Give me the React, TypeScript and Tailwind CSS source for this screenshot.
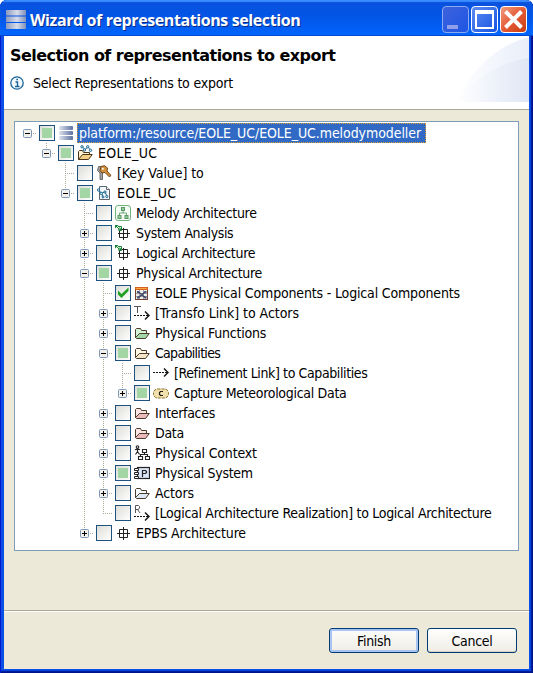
import type { ReactNode } from "react";

type IconName =
  | "stack" | "model" | "key" | "file" | "melody" | "gridGreen" | "grid" | "table"
  | "transfo" | "folderGreen" | "folderTan" | "folderRed" | "folderBlue" | "arrow"
  | "capability" | "context" | "system" | "realization";

type Row = {
  text: string;
  /** one character per tree column: " " empty, "|" line, "t" tee, "l" last, "+"/"-" expander */
  guides: string;
  below?: boolean;
  above?: boolean;
  state: "empty" | "partial" | "checked";
  icon: IconName;
  tracking?: string;
};

const rows: Row[] = [
  { text: "platform:/resource/EOLE_UC/EOLE_UC.melodymodeller", guides: "-", state: "partial", icon: "stack", tracking: "tracking-[-0.07px]" },
  { text: "EOLE_UC", guides: " -", above: true, state: "partial", icon: "model", tracking: "tracking-[0.3px]" },
  { text: "[Key Value] to", guides: "  t", state: "empty", icon: "key", tracking: "tracking-[-0.07px]" },
  { text: "EOLE_UC", guides: "  -", above: true, state: "partial", icon: "file", tracking: "tracking-[0.3px]" },
  { text: "Melody Architecture", guides: "   t", state: "empty", icon: "melody" },
  { text: "System Analysis", guides: "   +", above: true, below: true, state: "empty", icon: "gridGreen", tracking: "tracking-[-0.37px]" },
  { text: "Logical Architecture", guides: "   +", above: true, below: true, state: "empty", icon: "gridGreen" },
  { text: "Physical Architecture", guides: "   -", above: true, below: true, state: "partial", icon: "grid" },
  { text: "EOLE Physical Components - Logical Components", guides: "   |t", state: "checked", icon: "table", tracking: "tracking-[-0.16px]" },
  { text: "[Transfo Link] to Actors", guides: "   |+", above: true, below: true, state: "empty", icon: "transfo", tracking: "tracking-[-0.05px]" },
  { text: "Physical Functions", guides: "   |+", above: true, below: true, state: "empty", icon: "folderGreen", tracking: "tracking-[-0.24px]" },
  { text: "Capabilities", guides: "   |-", above: true, below: true, state: "partial", icon: "folderTan", tracking: "tracking-[-0.7px]" },
  { text: "[Refinement Link] to Capabilities", guides: "   ||t", state: "empty", icon: "arrow", tracking: "tracking-[-0.39px]" },
  { text: "Capture Meteorological Data", guides: "   ||+", above: true, state: "partial", icon: "capability" },
  { text: "Interfaces", guides: "   |+", above: true, below: true, state: "empty", icon: "folderRed" },
  { text: "Data", guides: "   |+", above: true, below: true, state: "empty", icon: "folderRed" },
  { text: "Physical Context", guides: "   |+", above: true, below: true, state: "empty", icon: "context", tracking: "tracking-[-0.17px]" },
  { text: "Physical System", guides: "   |+", above: true, below: true, state: "partial", icon: "system" },
  { text: "Actors", guides: "   |+", above: true, below: true, state: "empty", icon: "folderBlue", tracking: "tracking-[-0.13px]" },
  { text: "[Logical Architecture Realization] to Logical Architecture", guides: "   |l", state: "empty", icon: "realization" },
  { text: "EPBS Architecture", guides: "   +", above: true, state: "empty", icon: "grid", tracking: "tracking-[-0.18px]" },
];

function Guide({ kind, above, below }: { kind: string; above: boolean; below: boolean }) {
  const box = kind === "+" || kind === "-";
  const up = kind === "|" || kind === "t" || kind === "l" || (box && above);
  const down = kind === "|" || kind === "t" || (box && below);
  return (
    <svg width="19" height="20" className="shrink-0" fill="none" stroke="#aaa899" strokeDasharray="1 1">
      {up && <path d="M9.5 0V10" />}
      {down && <path d="M9.5 10V20" />}
      {(kind === "t" || kind === "l" || box) && <path d="M9 10.5H19" />}
      {box && (
        <g strokeDasharray="none">
          <rect x="5.5" y="6.5" width="8" height="8" rx="1" fill="#f2f0e9" stroke="#7c98b8" />
          <path d="M7 10.5H12" stroke="#000" />
          {kind === "+" && <path d="M9.5 8V13" stroke="#000" />}
        </g>
      )}
    </svg>
  );
}

function CheckBox({ state }: { state: Row["state"] }) {
  return (
    <span className="ml-0.5 flex size-4 shrink-0 items-center justify-center border border-[#1c5180] bg-linear-to-br from-[#dcdcd7] to-white">
      {state === "partial" && <span className="size-2.5 bg-[#a3d6a4]" />}
      {state === "checked" && (
        <svg width="14" height="14" viewBox="0 0 14 14">
          <path d="M2 4.500V8.500L5.500 12L12.500 5V1.500L5.500 8Z" fill="#21a121" />
        </svg>
      )}
    </span>
  );
}

function Folder({ back, front }: { back: string; front: string }) {
  return (
    <g stroke="#4a3a28" strokeLinejoin="round">
      <path d="M1.500 12.500V4.500L2.500 3.500H6.500L7.500 5.500H12.500V8.500H6L1.500 12.500Z" fill={back} />
      <path d="M1.500 12.500L5.500 8.500H15.300L11.500 13.500H2.500Z" fill={front} />
    </g>
  );
}

const art: Record<IconName, ReactNode> = {
  stack: (
    <g fill="url(#steel)">
      <rect x="1" y="1" width="14" height="4" rx="1" />
      <rect x="1" y="6" width="14" height="4" rx="1" />
      <rect x="1" y="11" width="14" height="4" rx="1" />
    </g>
  ),
  model: (
    <>
      <g stroke="#4c3517" strokeLinejoin="round">
        <path d="M1.500 14.500V6.500L2.500 5.500H5.500L6.500 7.500H12.500V9.500" fill="#fff3cf" />
        <path d="M1.500 14.500L5.500 9.500H15.300L11.500 14.500Z" fill="#f2cf86" />
      </g>
      <g fill="#d8edf8" stroke="#1f6a94">
        <path d="M5 1.500L8 4.500L11 2L14 5.500" fill="none" />
        <circle cx="5" cy="1.800" r="1.200" />
        <circle cx="7.500" cy="5" r="1.200" />
        <circle cx="10.700" cy="1.800" r="1.200" />
        <circle cx="13.500" cy="5.300" r="1.200" />
      </g>
    </>
  ),
  key: (
    <>
      <path d="M2.500 1.500H7.500L8.500 5.500L6.500 7.500V14.500H4V8L1.500 5.500Z" stroke="#6b6b6b" fill="#a3a3a3" />
      <path d="M5 1.500L8.500 .7L11.500 3L11 6L14.800 10.200L13.500 12L9 7.500L6 8L4 5.500Z" fill="#d2913f" stroke="#704515" />
      <circle cx="6.800" cy="3.800" r="1" fill="#fff" />
    </>
  ),
  file: (
    <>
      <path d="M3.500 1.500H10.500L13.500 4.500V14.500H3.500Z" fill="#f2f7fb" stroke="#5c6570" />
      <path d="M10.500 1.500V4.500H13.500" fill="#fff" stroke="#5c6570" />
      <g fill="#d8edf8" stroke="#1f6a94">
        <path d="M2.500 5L5.500 8L9 7L11 11.500M5.500 8L7 11.500" fill="none" />
        <circle cx="2.500" cy="5" r="1.200" /><circle cx="5.300" cy="8.500" r="1.200" />
        <circle cx="9" cy="7" r="1.100" /><circle cx="10.800" cy="11.500" r="1.100" />
        <circle cx="7" cy="12" r="1" />
      </g>
    </>
  ),
  melody: (
    <>
      <rect x=".5" y=".5" width="15" height="15" rx="2.500" fill="#f5fbf5" stroke="#6fb67c" />
      <path d="M8 5V8M4.500 11V8H11.500V11" fill="none" stroke="#6fa878" />
      <g fill="#8fcb96" stroke="#5d9868">
        <rect x="6.500" y="2.500" width="3" height="3" />
        <rect x="3" y="10.500" width="3" height="3" />
        <rect x="10" y="10.500" width="3" height="3" />
      </g>
    </>
  ),
  gridGreen: (
    <>
      <path d="M4.500 4.500H12.500V12.500H4.500ZM8.500 3V15M3 8.500H15" fill="none" stroke="#222" />
      <path d="M0 0H3.500L0 3.500Z" fill="#128033" />
      <path d="M1 1L4 4M3 1.500H6.500V5.500H3.500" fill="none" stroke="#128033" />
      <circle cx="4.500" cy="4" r="1" fill="#d7f4da" stroke="#128033" />
    </>
  ),
  grid: <path d="M4.500 4.500H12.500V12.500H4.500ZM8.500 2V15M2 8.500H15" fill="none" stroke="#222" />,
  table: (
    <>
      <rect x="1.500" y="2.500" width="12" height="12" fill="#f0ece8" stroke="#754334" />
      <rect x="1" y="2" width="13" height="3" fill="#d5611d" />
      <path d="M2 3.500H13" stroke="#f4a743" />
      <path d="M2 8.500H13M2 11.500H13M5.500 5V14M9.500 5V14" stroke="#a29ba8" />
      <path d="M4 6.500L11.500 13M11.500 6.500L4 13" stroke="#32405c" strokeWidth="1.100" />
      <path d="M3 6H5V8H3ZM10.500 6H12.500V8H10.500ZM3 11.500H5V13.500H3ZM10.500 11.500H12.500V13.500H10.500ZM7 9H9V11H7Z" fill="#425373" />
    </>
  ),
  transfo: (
    <g fill="none" stroke="#111">
      <path d="M0 1.500H7M3.500 1.500V8" stroke="#555" />
      <path d="M0 10.500H15" strokeDasharray="2 1" />
      <path d="M11 6.500L15 10.500L11 14.500" strokeWidth="1.400" />
    </g>
  ),
  folderGreen: <Folder back="#d6f4d8" front="#a3d8aa" />,
  folderTan: <Folder back="#fff8e6" front="#f6e5c8" />,
  folderRed: <Folder back="#fae4e4" front="#ecbabc" />,
  folderBlue: <Folder back="#f4f8ff" front="#dce8f5" />,
  arrow: (
    <g fill="none" stroke="#111">
      <path d="M0 7.500H15" strokeDasharray="2 1" />
      <path d="M11 3.500L15 7.500L11 11.500" strokeWidth="1.400" />
    </g>
  ),
  capability: (
    <>
      <rect x=".5" y="4" width="15" height="9" rx="4" fill="#efe0ad" stroke="#8f7132" strokeDasharray="3 1" />
      <path d="M10 6.500H7.500L6.500 7.500V9.500L7.500 10.500H10" fill="none" stroke="#221a0a" strokeWidth="1.200" />
    </>
  ),
  context: (
    <g fill="none" stroke="#222" strokeWidth="1.100">
      <circle cx="3.500" cy="2" r="1.300" />
      <path d="M1 4.800L3.500 3.800L6 4.800M3.500 4V6.500L1.500 9.500M3.500 6.500L5.500 9.500" />
      <path d="M8.500 4.500H12.500V7.500H8.500ZM10.500 8V10M6.500 12V9.500H13.500V12M4.500 11.500H8.500V14.500H4.500ZM11.500 11.500H15.500V14.500H11.500Z" />
    </g>
  ),
  system: (
    <g fill="none" stroke="#222">
      <rect x="3.500" y="2.500" width="12" height="11" fill="#dae4f5" strokeWidth="1.200" />
      <path d="M.5 3.500H4.500V5.500H.5ZM.5 7.500H4.500V9.500H.5ZM.5 11.500H4.500V13.500H.5Z" fill="#fff" />
      <path d="M8.500 12V5.500H11.500L12.500 6.500V7.500L11.500 8.500H8.500" strokeWidth="1.200" />
    </g>
  ),
  realization: (
    <g fill="none" stroke="#111">
      <path d="M1.500 8V.5H4.500L5.500 1.500V3L4.500 4.500H1.500M3.500 4.500L6 8" stroke="#555" />
      <path d="M0 11.500H15" strokeDasharray="2 1" />
      <path d="M11 7.500L15 11.500L11 15.500" strokeWidth="1.400" />
    </g>
  ),
};

function Icon({ name }: { name: IconName }) {
  return (
    <svg width="16" height="16" viewBox="0 0 16 16" className="ml-[3px] shrink-0">
      {name === "stack" && (
        <defs>
          <linearGradient id="steel">
            <stop offset="0" stopColor="#dfe4f0" />
            <stop offset="1" stopColor="#5c719f" />
          </linearGradient>
        </defs>
      )}
      {art[name]}
    </svg>
  );
}

function TreeRow({ row, selected }: { row: Row; selected: boolean }) {
  return (
    <div className="flex h-5 items-center pl-[3px]">
      {row.guides.split("").map((kind, i) => (
        <Guide key={i} kind={kind} above={!!row.above} below={!!row.below} />
      ))}
      <CheckBox state={row.state} />
      <Icon name={row.icon} />
      <span
        className={`ml-[3px] h-5 border pl-px text-[14px] leading-[18px] whitespace-pre ${row.tracking ?? "tracking-[-0.3px]"} ${
          selected ? "w-[349px] border-dotted border-[#e0a030] bg-[#316ac5] text-white" : "border-transparent"
        }`}
      >
        {row.text}
      </span>
    </div>
  );
}

function TitleBar() {
  return (
    <div className="flex h-9 shrink-0 items-center bg-linear-to-b from-[#0a50dc] via-[#0256e8] to-[#0166ff] px-1.5 shadow-[inset_0_2px_1px_#3b8cff,inset_0_-1px_0_#0148cf]">
      <svg width="20" height="19" viewBox="0 0 20 19" className="mt-[3px]">
        <defs>
          <linearGradient id="title-steel">
            <stop offset="0" stopColor="#8c99bd" />
            <stop offset=".55" stopColor="#d8dcea" />
            <stop offset="1" stopColor="#8290b8" />
          </linearGradient>
        </defs>
        <path d="M0 0H20V5.500H0ZM0 6.500H20V12H0ZM0 13H20V19H0Z" fill="url(#title-steel)" />
      </svg>
      <h1 className="mt-[3px] ml-1 grow font-['Open_Sans',sans-serif] text-[16px] leading-8 font-bold tracking-[-0.4px] whitespace-pre text-white [text-shadow:1px_1px_0_#0a2a86]">
        Wizard of representations selection
      </h1>
      <div className="mt-[3px] flex gap-0.5">
        <span className="size-[27px] rounded-[4px] border border-[#8fa9ee] bg-linear-to-br from-[#3c62dc] to-[#1c55e4]">
          <svg width="25" height="25"><path d="M4 18H15V22H4Z" fill="#8f9fe9" /></svg>
        </span>
        <span className="size-[27px] rounded-[4px] border border-white bg-linear-to-br from-[#5d8bf2] to-[#1252e0]">
          <svg width="25" height="25"><path d="M3 3H22V22H3ZM5 7V20H20V7Z" fill="#fff" fillRule="evenodd" /></svg>
        </span>
        <span className="size-[27px] rounded-[4px] border border-white bg-linear-to-br from-[#f09a7d] via-[#e35a35] to-[#c93c10]">
          <svg width="25" height="25"><path d="M4.500 4.500L20.500 20.500M20.500 4.500L4.500 20.500" stroke="#fff" strokeWidth="4" /></svg>
        </span>
      </div>
    </div>
  );
}

export default function App() {
  return (
    <div className="bg-white">
      <div className="flex h-[673px] w-[533px] flex-col overflow-hidden rounded-t-[7px] bg-[#0a50e6] font-['DejaVu_Sans_Condensed','DejaVu_Sans',sans-serif] text-black shadow-[inset_1px_0_0_#0019cf,inset_-1px_-1px_0_#00138c,inset_-2px_-2px_0_#001ea0,inset_-3px_-3px_0_#0441d8]">
        <TitleBar />
        <div className="mx-1 mb-1 flex grow flex-col bg-[#ece9d8]">
          <header className="flex h-[74px] shrink-0 border-b border-[#aca899] bg-white">
            <div className="w-[452px] pl-1.5">
              <h2 className="mt-[9px] font-['DejaVu_Sans',sans-serif] text-[16px] leading-[22px] font-bold tracking-[-0.54px] whitespace-pre">
                Selection of representations to export
              </h2>
              <p className="mt-[6px] flex items-center text-[14px] leading-5 tracking-[-0.2px] whitespace-pre">
                <svg width="14" height="14" viewBox="0 0 14 14" fill="none" stroke="#1b6398">
                  <circle cx="7" cy="7" r="6.200" fill="#f2faff" strokeWidth="1.300" />
                  <path d="M5.500 6H7.500V10.500M5 10.500H9.500" strokeWidth="1.400" />
                  <path d="M6.300 3.500H8" strokeWidth="1.700" />
                </svg>
                <span className="ml-[9px]">Select Representations to export</span>
              </p>
            </div>
            <svg width="73" height="66" viewBox="0 0 73 66">
              <defs>
                <linearGradient id="sweep">
                  <stop offset="0" stopColor="#fff" />
                  <stop offset="1" stopColor="#dfe6f5" />
                </linearGradient>
                <linearGradient id="sweep-back">
                  <stop offset="0" stopColor="#fff" />
                  <stop offset="1" stopColor="#e9eef9" />
                </linearGradient>
              </defs>
              <path d="M0 66Q25 14 73 1V66Z" fill="url(#sweep-back)" />
              <path d="M0 66Q31 28 73 22V66Z" fill="url(#sweep)" />
            </svg>
          </header>
          <main className="flex h-[501px] shrink-0 flex-col border-b border-[#aca899] px-2.5 pt-[11px]">
            <div className="h-[430px] w-[505px] border border-[#7f9db9] bg-white pt-px">
              {rows.map((row, i) => (
                <TreeRow key={i} row={row} selected={i === 0} />
              ))}
            </div>
          </main>
          <footer className="flex grow justify-end gap-2 border-t border-white pt-4 pr-3">
            <button className="h-[25px] w-[90px] rounded-[3px] border border-[#003c74] bg-linear-to-b from-[#fdfdfb] to-[#efede5] text-[14px] leading-[22px] tracking-[-0.3px] shadow-[inset_0_0_0_2px_#a9c3f2]">
              Finish
            </button>
            <button className="h-[25px] w-[90px] rounded-[3px] border border-[#003c74] bg-linear-to-b from-white to-[#eeece4] text-[14px] leading-[22px] tracking-[-0.3px] shadow-[inset_0_-1px_0_#d6d0c5]">
              Cancel
            </button>
          </footer>
        </div>
      </div>
    </div>
  );
}
